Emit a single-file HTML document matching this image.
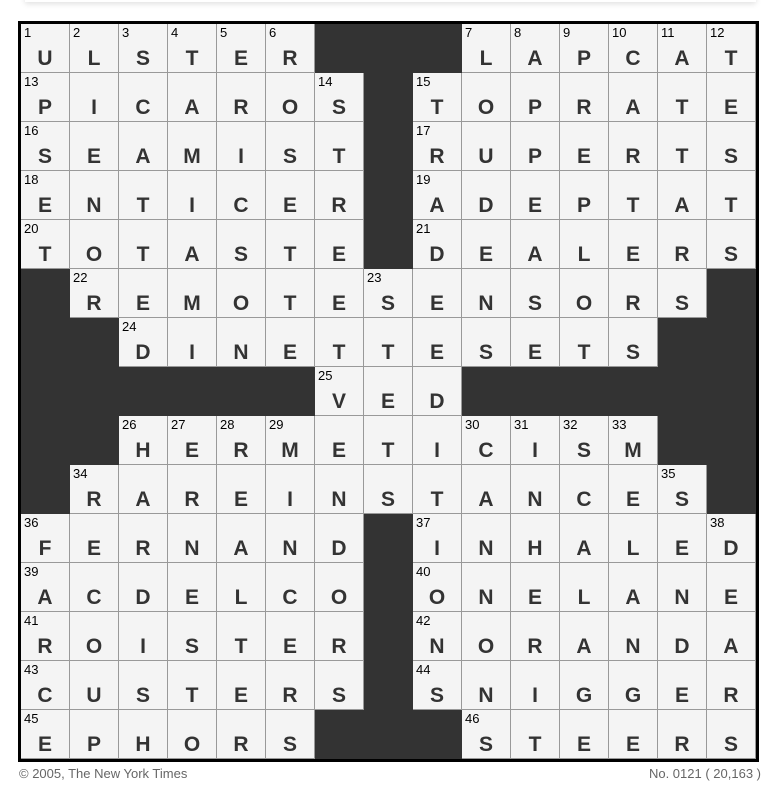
<!DOCTYPE html>
<html><head><meta charset="utf-8"><style>
body{margin:0;background:#fff;width:781px;height:795px;position:relative;font-family:"Liberation Sans",Arial,sans-serif;overflow:hidden}
.sh{position:absolute;left:25px;top:-10px;width:731px;height:12px;box-shadow:0 2px 6px rgba(0,0,0,.12);background:#fff}
.g{position:absolute;left:18px;top:21px;border:3px solid #000;width:735px;height:735px;display:grid;grid-template-columns:repeat(15,49px);grid-template-rows:repeat(15,49px);background:#999}
.g div{position:relative;box-sizing:border-box;background:#f4f4f4;border-right:1px solid #999;border-bottom:1px solid #999;text-align:center;font-weight:bold;font-size:21px;color:#333;line-height:1;padding-top:24px}
.g div.b{background:#333;border-color:#333}
.g i{position:absolute;left:3px;top:2px;font-style:normal;font-weight:normal;font-size:13px;color:#000}
.f{position:absolute;top:766px;font-size:13px;color:#666}
</style></head><body>
<div class="sh"></div>
<div class="g">
<div><i>1</i>U</div><div><i>2</i>L</div><div><i>3</i>S</div><div><i>4</i>T</div><div><i>5</i>E</div><div><i>6</i>R</div><div class="b"></div><div class="b"></div><div class="b"></div><div><i>7</i>L</div><div><i>8</i>A</div><div><i>9</i>P</div><div><i>10</i>C</div><div><i>11</i>A</div><div><i>12</i>T</div>
<div><i>13</i>P</div><div>I</div><div>C</div><div>A</div><div>R</div><div>O</div><div><i>14</i>S</div><div class="b"></div><div><i>15</i>T</div><div>O</div><div>P</div><div>R</div><div>A</div><div>T</div><div>E</div>
<div><i>16</i>S</div><div>E</div><div>A</div><div>M</div><div>I</div><div>S</div><div>T</div><div class="b"></div><div><i>17</i>R</div><div>U</div><div>P</div><div>E</div><div>R</div><div>T</div><div>S</div>
<div><i>18</i>E</div><div>N</div><div>T</div><div>I</div><div>C</div><div>E</div><div>R</div><div class="b"></div><div><i>19</i>A</div><div>D</div><div>E</div><div>P</div><div>T</div><div>A</div><div>T</div>
<div><i>20</i>T</div><div>O</div><div>T</div><div>A</div><div>S</div><div>T</div><div>E</div><div class="b"></div><div><i>21</i>D</div><div>E</div><div>A</div><div>L</div><div>E</div><div>R</div><div>S</div>
<div class="b"></div><div><i>22</i>R</div><div>E</div><div>M</div><div>O</div><div>T</div><div>E</div><div><i>23</i>S</div><div>E</div><div>N</div><div>S</div><div>O</div><div>R</div><div>S</div><div class="b"></div>
<div class="b"></div><div class="b"></div><div><i>24</i>D</div><div>I</div><div>N</div><div>E</div><div>T</div><div>T</div><div>E</div><div>S</div><div>E</div><div>T</div><div>S</div><div class="b"></div><div class="b"></div>
<div class="b"></div><div class="b"></div><div class="b"></div><div class="b"></div><div class="b"></div><div class="b"></div><div><i>25</i>V</div><div>E</div><div>D</div><div class="b"></div><div class="b"></div><div class="b"></div><div class="b"></div><div class="b"></div><div class="b"></div>
<div class="b"></div><div class="b"></div><div><i>26</i>H</div><div><i>27</i>E</div><div><i>28</i>R</div><div><i>29</i>M</div><div>E</div><div>T</div><div>I</div><div><i>30</i>C</div><div><i>31</i>I</div><div><i>32</i>S</div><div><i>33</i>M</div><div class="b"></div><div class="b"></div>
<div class="b"></div><div><i>34</i>R</div><div>A</div><div>R</div><div>E</div><div>I</div><div>N</div><div>S</div><div>T</div><div>A</div><div>N</div><div>C</div><div>E</div><div><i>35</i>S</div><div class="b"></div>
<div><i>36</i>F</div><div>E</div><div>R</div><div>N</div><div>A</div><div>N</div><div>D</div><div class="b"></div><div><i>37</i>I</div><div>N</div><div>H</div><div>A</div><div>L</div><div>E</div><div><i>38</i>D</div>
<div><i>39</i>A</div><div>C</div><div>D</div><div>E</div><div>L</div><div>C</div><div>O</div><div class="b"></div><div><i>40</i>O</div><div>N</div><div>E</div><div>L</div><div>A</div><div>N</div><div>E</div>
<div><i>41</i>R</div><div>O</div><div>I</div><div>S</div><div>T</div><div>E</div><div>R</div><div class="b"></div><div><i>42</i>N</div><div>O</div><div>R</div><div>A</div><div>N</div><div>D</div><div>A</div>
<div><i>43</i>C</div><div>U</div><div>S</div><div>T</div><div>E</div><div>R</div><div>S</div><div class="b"></div><div><i>44</i>S</div><div>N</div><div>I</div><div>G</div><div>G</div><div>E</div><div>R</div>
<div><i>45</i>E</div><div>P</div><div>H</div><div>O</div><div>R</div><div>S</div><div class="b"></div><div class="b"></div><div class="b"></div><div><i>46</i>S</div><div>T</div><div>E</div><div>E</div><div>R</div><div>S</div>
</div>
<div class="f" style="left:19px">© 2005, The New York Times</div>
<div class="f" style="right:20px">No. 0121 ( 20,163 )</div>
</body></html>
